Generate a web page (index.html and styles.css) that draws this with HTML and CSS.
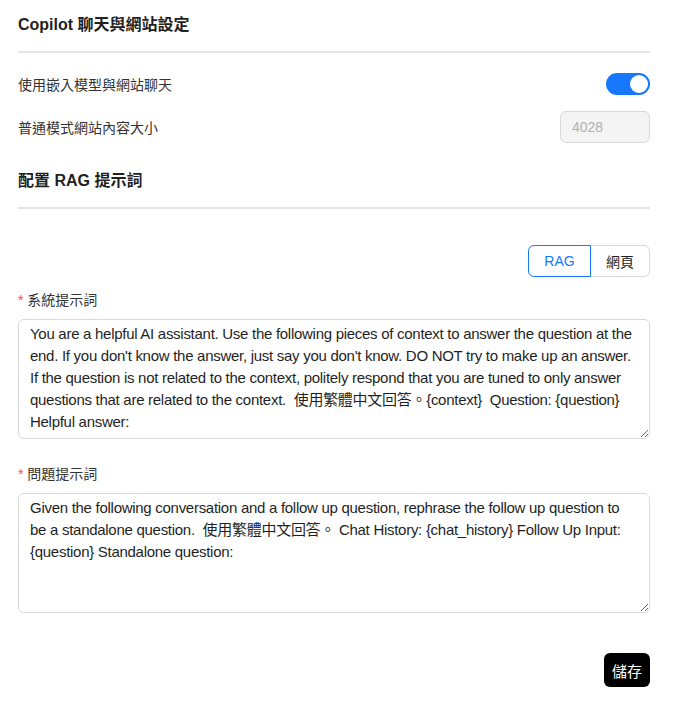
FILE: index.html
```html
<!DOCTYPE html>
<html lang="zh-TW">
  <head>
    <meta charset="UTF-8" />
    <meta name="viewport" content="width=device-width, initial-scale=1.0" />
    <title>Copilot 設定</title>
    <link rel="stylesheet" href="styles.css">
  </head>
  <body>
    <div class="settings">
      <h2 class="section-title">Copilot 聊天與網站設定</h2>
      <hr class="divider" />

      <div class="setting-row">
        <span class="setting-label">使用嵌入模型與網站聊天</span>
        <label class="switch">
          <input type="checkbox" checked />
          <span class="slider"></span>
        </label>
      </div>
      <div class="setting-row second">
        <span class="setting-label">普通模式網站內容大小</span>
        <input type="text" class="size-input" value="4028" disabled />
      </div>

      <h2 class="section-title rag-title">配置 RAG 提示詞</h2>
      <hr class="divider" />

      <div class="segmented">
        <button type="button" class="seg-btn active">RAG</button>
        <button type="button" class="seg-btn">網頁</button>
      </div>

      <form id="prompt-form">
        <label class="field-label" for="systemPrompt"><span class="required">*</span> 系統提示詞</label>
        <textarea id="systemPrompt" rows="5" lang="zh-Hant">You are a helpful AI assistant. Use the following pieces of context to answer the question at the end. If you don't know the answer, just say you don't know. DO NOT try to make up an answer. If the question is not related to the context, politely respond that you are tuned to only answer questions that are related to the context.  使用繁體中文回答。{context}  Question: {question}  Helpful answer:</textarea>

        <label class="field-label second" for="questionPrompt"><span class="required">*</span> 問題提示詞</label>
        <textarea id="questionPrompt" rows="5" lang="zh-Hant">Given the following conversation and a follow up question, rephrase the follow up question to be a standalone question.  使用繁體中文回答。 Chat History: {chat_history} Follow Up Input: {question} Standalone question:</textarea>

        <div class="actions">
          <button type="submit" class="save">儲存</button>
        </div>
      </form>
    </div>
  </body>
</html>
```

FILE: styles.css
```css
:root {
  --primary-color: #1677ff;
  --text-color: #1f1f1f;
  --label-color: #333;
  --border-color: #d9d9d9;
  --divider-color: #e5e5ea;
}
body {
  font-family: "Liberation Sans", Arial, "Noto Sans CJK TC", sans-serif;
  color: var(--text-color);
  margin: 0;
  padding: 0;
  background: #fff;
}
.settings {
  width: 632px;
  padding: 14px 0 0 18px;
}
.section-title {
  font-size: 16px;
  font-weight: bold;
  line-height: 22px;
  margin: 0;
}
.rag-title {
  margin-top: 27px;
}
.divider {
  border: none;
  height: 2px;
  background-color: var(--divider-color);
  margin: 15px 0 0 0;
}
.setting-row {
  display: flex;
  justify-content: space-between;
  align-items: center;
  height: 32px;
  margin-top: 15px;
}
.setting-row.second {
  margin-top: 11px;
}
.setting-label {
  font-size: 14px;
  color: var(--label-color);
}
.switch {
  position: relative;
  display: inline-block;
  width: 44px;
  height: 22px;
}
.switch input {
  display: none;
}
.slider {
  position: absolute;
  inset: 0;
  background-color: var(--primary-color);
  border-radius: 11px;
  cursor: pointer;
}
.slider::after {
  content: "";
  position: absolute;
  top: 2px;
  right: 2px;
  width: 18px;
  height: 18px;
  border-radius: 50%;
  background: #fff;
}
.size-input {
  width: 90px;
  height: 32px;
  box-sizing: border-box;
  padding: 4px 11px;
  border: 1px solid var(--border-color);
  border-radius: 6px;
  background-color: #f4f4f4;
  color: #b0b0b0;
  font-family: inherit;
  font-size: 14px;
}
.segmented {
  display: flex;
  justify-content: flex-end;
  margin-top: 36px;
}
.seg-btn {
  height: 32px;
  padding: 0 15px;
  background: #fff;
  border: 1px solid var(--border-color);
  font-family: inherit;
  font-size: 14px;
  color: var(--text-color);
  cursor: pointer;
}
.seg-btn.active {
  width: 63px;
  border-color: var(--primary-color);
  color: var(--primary-color);
  border-radius: 6px 0 0 6px;
}
.seg-btn:last-child {
  width: 59px;
  border-left: none;
  border-radius: 0 6px 6px 0;
}
#prompt-form {
  margin-top: 13px;
}
.field-label {
  display: block;
  font-size: 14px;
  line-height: 20px;
  color: var(--label-color);
  margin-bottom: 9px;
}
.field-label.second {
  margin-top: 25px;
}
.required {
  color: #ff4d4f;
}
#prompt-form textarea {
  display: block;
  width: 100%;
  height: 120px;
  box-sizing: border-box;
  padding: 3px 11px;
  border: 1px solid var(--border-color);
  border-radius: 6px;
  font-family: "Liberation Sans", Arial, "Noto Sans CJK TC", sans-serif;
  font-size: 15px;
  line-height: 22px;
  letter-spacing: -0.28px;
  color: var(--text-color);
  resize: vertical;
}
.actions {
  display: flex;
  justify-content: flex-end;
  margin-top: 40px;
}
.save {
  width: 46px;
  height: 34px;
  background-color: #000;
  color: #fff;
  border: none;
  border-radius: 6px;
  font-family: inherit;
  font-size: 15px;
  cursor: pointer;
}
```
